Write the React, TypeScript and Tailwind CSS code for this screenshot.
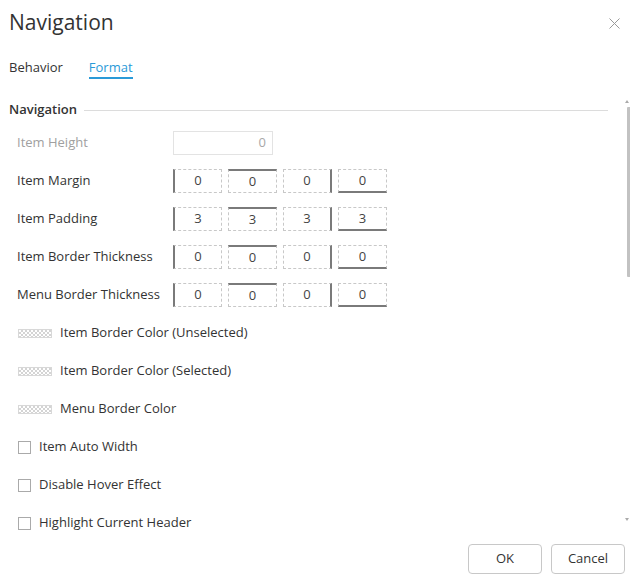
const sides = [
  "border-l-2 border-l-[#7a7a7a] [border-left-style:solid]",
  "border-t-2 border-t-[#7a7a7a] [border-top-style:solid]",
  "border-r-2 border-r-[#7a7a7a] [border-right-style:solid]",
  "border-b-2 border-b-[#7a7a7a] [border-bottom-style:solid]",
];

function Quad({ values }: { values: string[] }) {
  return (
    <div className="flex gap-[6px]">
      {values.map((v, i) => (
        <div
          key={i}
          className={`w-[49px] h-[24px] border border-dashed border-[#c8c8c8] flex items-center justify-center text-[13px] text-[#444] ${sides[i]}`}
        >
          {v}
        </div>
      ))}
    </div>
  );
}

function Swatch() {
  return (
    <div
      className="w-[34px] h-[9px] border border-[#d8d8d8]"
      style={{
        backgroundImage:
          "linear-gradient(45deg,#d4d4d4 25%,transparent 25%,transparent 75%,#d4d4d4 75%),linear-gradient(45deg,#d4d4d4 25%,transparent 25%,transparent 75%,#d4d4d4 75%)",
        backgroundSize: "4px 4px",
        backgroundPosition: "0 0,2px 2px",
      }}
    />
  );
}

function Row({ label, children, muted }: { label: string; children?: React.ReactNode; muted?: boolean }) {
  return (
    <div className="h-[38px] flex items-center pl-[17px]">
      <div className={`w-[156px] text-[13px] ${muted ? "text-[#a0a0a0]" : "text-[#333]"}`}>{label}</div>
      {children}
    </div>
  );
}

export default function App() {
  return (
    <div className="w-[630px] h-[582px] bg-white relative overflow-hidden text-[#333]" style={{ fontFamily: '"Open Sans", "Noto Sans", sans-serif' }}>
      <div className="flex items-start justify-between pl-[9px] pr-[10px] pt-[7px] h-[46px]">
        <h1 className="text-[21px] text-[#333] leading-[30px]">Navigation</h1>
        <svg width="11" height="11" viewBox="0 0 11 11" className="mt-[11px]">
          <path d="M0.5 0.5L10.5 10.5M10.5 0.5L0.5 10.5" stroke="#999" strokeWidth="1" />
        </svg>
      </div>
      <div className="flex pl-[9px] gap-[26px] text-[13px] h-[34px]">
        <div className="pt-[12px] text-[#333]">Behavior</div>
        <div className="pt-[12px] text-[#2a9ad8] relative">
          Format
          <div className="absolute left-0 right-0 top-[31px] h-[2px] bg-[#2a9ad8]" />
        </div>
      </div>
      <div className="flex items-center pl-[9px] pr-[22px] mt-[21px] h-[18px]">
        <div className="text-[13px] font-semibold text-[#333] pr-[7px]">Navigation</div>
        <div className="flex-1 h-px bg-[#dcdcdc]" />
      </div>
      <div className="pt-[5px]">
        <Row label="Item Height" muted>
          <div className="w-[100px] h-[24px] border border-[#e3e3e3] flex items-center justify-end pr-[6px] text-[13px] text-[#a8a8a8]">0</div>
        </Row>
        <Row label="Item Margin"><Quad values={["0", "0", "0", "0"]} /></Row>
        <Row label="Item Padding"><Quad values={["3", "3", "3", "3"]} /></Row>
        <Row label="Item Border Thickness"><Quad values={["0", "0", "0", "0"]} /></Row>
        <Row label="Menu Border Thickness"><Quad values={["0", "0", "0", "0"]} /></Row>
        {["Item Border Color (Unselected)", "Item Border Color (Selected)", "Menu Border Color"].map((t) => (
          <div key={t} className="h-[38px] flex items-center pl-[18px] gap-[8px] text-[13px] text-[#333]">
            <Swatch />
            <span>{t}</span>
          </div>
        ))}
        {["Item Auto Width", "Disable Hover Effect", "Highlight Current Header"].map((t) => (
          <div key={t} className="h-[38px] flex items-center pl-[18px] gap-[8px] text-[13px] text-[#333]">
            <div className="w-[13px] h-[13px] border border-[#aaa] bg-white" />
            <span>{t}</span>
          </div>
        ))}
      </div>
      {/* scrollbar */}
      <div className="absolute right-0 top-[98px] w-[6px] h-[425px]">
        <div className="absolute right-[1px] top-[2px] w-0 h-0 border-l-[2px] border-r-[2px] border-b-[3px] border-l-transparent border-r-transparent border-b-[#aaa]" />
        <div className="absolute right-0 top-[9px] w-[3px] h-[170px] bg-[#c2c2c2] rounded-l-[1px]" />
        <div className="absolute right-[1px] bottom-[2px] w-0 h-0 border-l-[2px] border-r-[2px] border-t-[3px] border-l-transparent border-r-transparent border-t-[#aaa]" />
      </div>
      <div className="absolute bottom-[8px] right-[5px] flex gap-[9px]">
        <button className="w-[74px] h-[30px] border border-[#c8c8c8] rounded-[4px] text-[13px] text-[#333] bg-white">OK</button>
        <button className="w-[74px] h-[30px] border border-[#c8c8c8] rounded-[4px] text-[13px] text-[#333] bg-white">Cancel</button>
      </div>
    </div>
  );
}
